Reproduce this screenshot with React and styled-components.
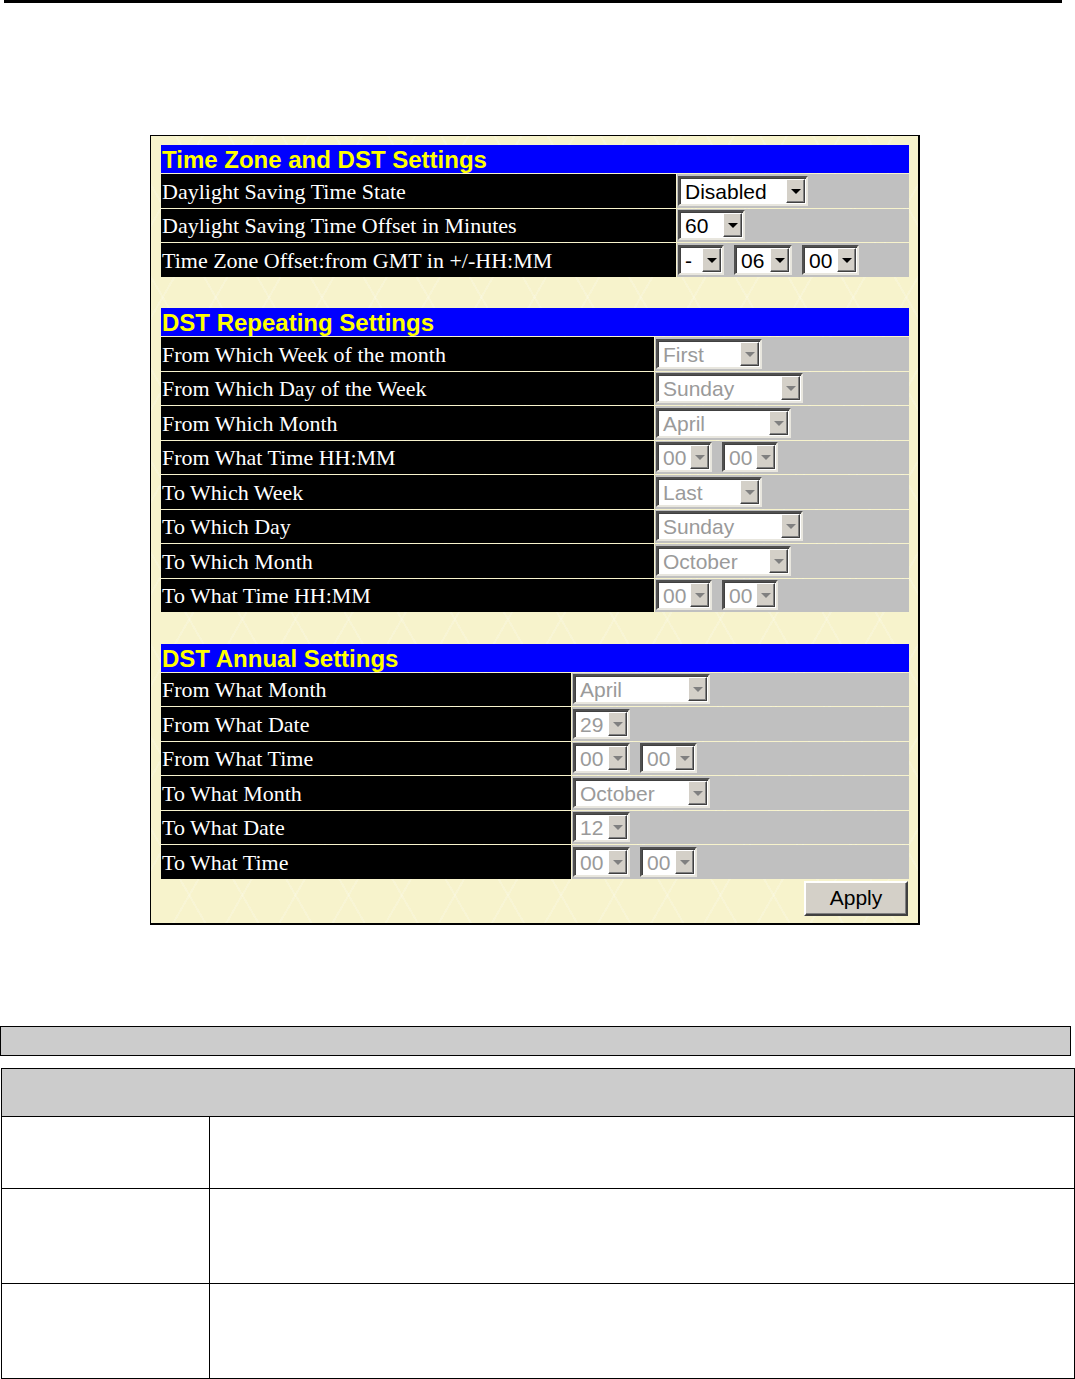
import React from "react";
import styled, { createGlobalStyle } from "styled-components";

const GlobalStyle = createGlobalStyle`
  body {
    margin: 0;
    background: #ffffff;
    font-family: "Liberation Sans", Arial, sans-serif;
  }
`;

const Page = styled.div`
  width: 1075px;
`;

const TopRule = styled.div`
  margin-left: 4px;
  width: 1058px;
  height: 3px;
  background: #000;
`;

const Panel = styled.div`
  box-sizing: border-box;
  margin: 132px 0 0 150px;
  width: 770px;
  border: 1px solid #000;
  border-right-width: 2px;
  border-bottom-width: 2px;
  padding: 9px 9px 7px 10px;
  background-color: #f7f3cc;
  background-image: repeating-linear-gradient(
      60deg,
      rgba(255, 255, 255, 0.18) 0 2px,
      transparent 2px 46px
    ),
    repeating-linear-gradient(
      -60deg,
      rgba(255, 255, 255, 0.18) 0 2px,
      transparent 2px 46px
    );
`;

const Section = styled.div`
  display: grid;
  grid-template-columns: ${(p) => p.$label}px 1fr;
  gap: 1px;
  margin-bottom: ${(p) => (p.$last ? 0 : 31.5)}px;
`;

const Header = styled.div`
  grid-column: 1 / -1;
  height: 28px;
  background: #0000ff;
  color: #ffff00;
  font-family: "Liberation Sans", Arial, sans-serif;
  font-weight: bold;
  font-size: 24px;
  line-height: 29px;
  padding-left: 1px;
  white-space: nowrap;
`;

const Label = styled.div`
  height: 33.5px;
  background: #000;
  color: #fff;
  font-family: "Liberation Serif", "Times New Roman", serif;
  font-size: 22px;
  display: flex;
  align-items: center;
  padding: 2px 0 0 1px;
  box-sizing: border-box;
  white-space: nowrap;
  overflow: hidden;
`;

const Control = styled.div`
  height: 33.5px;
  background: #c0c0c0;
  display: flex;
  align-items: center;
  gap: ${(p) => p.$gap || 10}px;
  padding-left: 1px;
`;

const SelectBox = styled.div`
  box-sizing: border-box;
  width: ${(p) => p.$w}px;
  height: 30px;
  display: flex;
  align-items: stretch;
  background: #fff;
  border: 2px solid;
  border-color: #505050 #e8e6de #e8e6de #505050;
  box-shadow: inset 1px 1px 0 #404040;
  padding: 1px 1px 1px 2px;
`;

const SelectValue = styled.div`
  flex: 1;
  font-family: "Liberation Sans", Arial, sans-serif;
  font-size: 21px;
  line-height: 25px;
  padding-left: 3px;
  color: ${(p) => (p.$disabled ? "#9a9a9a" : "#000")};
  white-space: nowrap;
  overflow: hidden;
`;

const ArrowButton = styled.div`
  box-sizing: border-box;
  width: 19px;
  background: #d4d0c8;
  border: 1px solid;
  border-color: #ffffff #404040 #404040 #ffffff;
  box-shadow: inset -1px -1px 0 #808080;
  display: flex;
  align-items: center;
  justify-content: center;
`;

const Triangle = styled.div`
  width: 0;
  height: 0;
  border-left: 5px solid transparent;
  border-right: 5px solid transparent;
  border-top: 5px solid ${(p) => (p.$disabled ? "#808080" : "#000")};
  margin-top: 1px;
`;

const ButtonRow = styled.div`
  display: flex;
  justify-content: flex-end;
  padding: 2px 1px 0 0;
`;

const ApplyButton = styled.button`
  box-sizing: border-box;
  width: 104px;
  height: 35px;
  background: #d4d0c8;
  border: 2px solid;
  border-color: #ffffff #404040 #404040 #ffffff;
  box-shadow: inset -1px -1px 0 #808080;
  font-family: "Liberation Sans", Arial, sans-serif;
  font-size: 21px;
  color: #000;
  padding: 0;
`;

const GrayBar = styled.div`
  box-sizing: border-box;
  margin-top: 101px;
  width: 1071px;
  height: 30px;
  border: 1px solid #000;
  background: #cccccc;
`;

const InfoTable = styled.div`
  box-sizing: border-box;
  margin: 12px 0 0 1px;
  width: 1074px;
  display: grid;
  grid-template-columns: 208px 1fr;
  border-top: 1px solid #000;
  border-left: 1px solid #000;
`;

const InfoHead = styled.div`
  grid-column: 1 / -1;
  height: 47px;
  background: #cccccc;
  border-right: 1px solid #000;
  border-bottom: 1px solid #000;
`;

const InfoCell = styled.div`
  height: ${(p) => p.$h}px;
  background: #fff;
  border-right: 1px solid #000;
  border-bottom: 1px solid #000;
`;

function Select({ value, width, disabled }) {
  return (
    <SelectBox $w={width}>
      <SelectValue $disabled={disabled}>{value}</SelectValue>
      <ArrowButton>
        <Triangle $disabled={disabled} />
      </ArrowButton>
    </SelectBox>
  );
}

const sections = [
  {
    title: "Time Zone and DST Settings",
    label: 515,
    rows: [
      ["Daylight Saving Time State", [["Disabled", 130]]],
      ["Daylight Saving Time Offset in Minutes", [["60", 67]]],
      [
        "Time Zone Offset:from GMT in +/-HH:MM",
        [
          ["-", 46],
          ["06", 58],
          ["00", 57],
        ],
      ],
    ],
  },
  {
    title: "DST Repeating Settings",
    label: 493,
    disabled: true,
    rows: [
      ["From Which Week of the month", [["First", 106]]],
      ["From Which Day of the Week", [["Sunday", 147]]],
      ["From Which Month", [["April", 135]]],
      [
        "From What Time HH:MM",
        [
          ["00", 56],
          ["00", 56],
        ],
      ],
      ["To Which Week", [["Last", 106]]],
      ["To Which Day", [["Sunday", 147]]],
      ["To Which Month", [["October", 135]]],
      [
        "To What Time HH:MM",
        [
          ["00", 56],
          ["00", 56],
        ],
      ],
    ],
  },
  {
    title: "DST Annual Settings",
    label: 410,
    disabled: true,
    rows: [
      ["From What Month", [["April", 137]]],
      ["From What Date", [["29", 57]]],
      [
        "From What Time",
        [
          ["00", 57],
          ["00", 57],
        ],
      ],
      ["To What Month", [["October", 137]]],
      ["To What Date", [["12", 57]]],
      [
        "To What Time",
        [
          ["00", 57],
          ["00", 57],
        ],
      ],
    ],
  },
];

function App() {
  return (
    <Page>
      <GlobalStyle />
      <TopRule />
      <Panel>
        {sections.map((s, i) => (
          <Section key={s.title} $label={s.label} $last={i === sections.length - 1}>
            <Header>{s.title}</Header>
            {s.rows.map(([label, selects]) => (
              <React.Fragment key={label}>
                <Label>{label}</Label>
                <Control>
                  {selects.map(([value, width], j) => (
                    <Select key={j} value={value} width={width} disabled={s.disabled} />
                  ))}
                </Control>
              </React.Fragment>
            ))}
          </Section>
        ))}
        <ButtonRow>
          <ApplyButton>Apply</ApplyButton>
        </ButtonRow>
      </Panel>
      <GrayBar />
      <InfoTable>
        <InfoHead />
        <InfoCell $h={71} />
        <InfoCell $h={71} />
        <InfoCell $h={94} />
        <InfoCell $h={94} />
        <InfoCell $h={94} />
        <InfoCell $h={94} />
      </InfoTable>
    </Page>
  );
}

export default App;
